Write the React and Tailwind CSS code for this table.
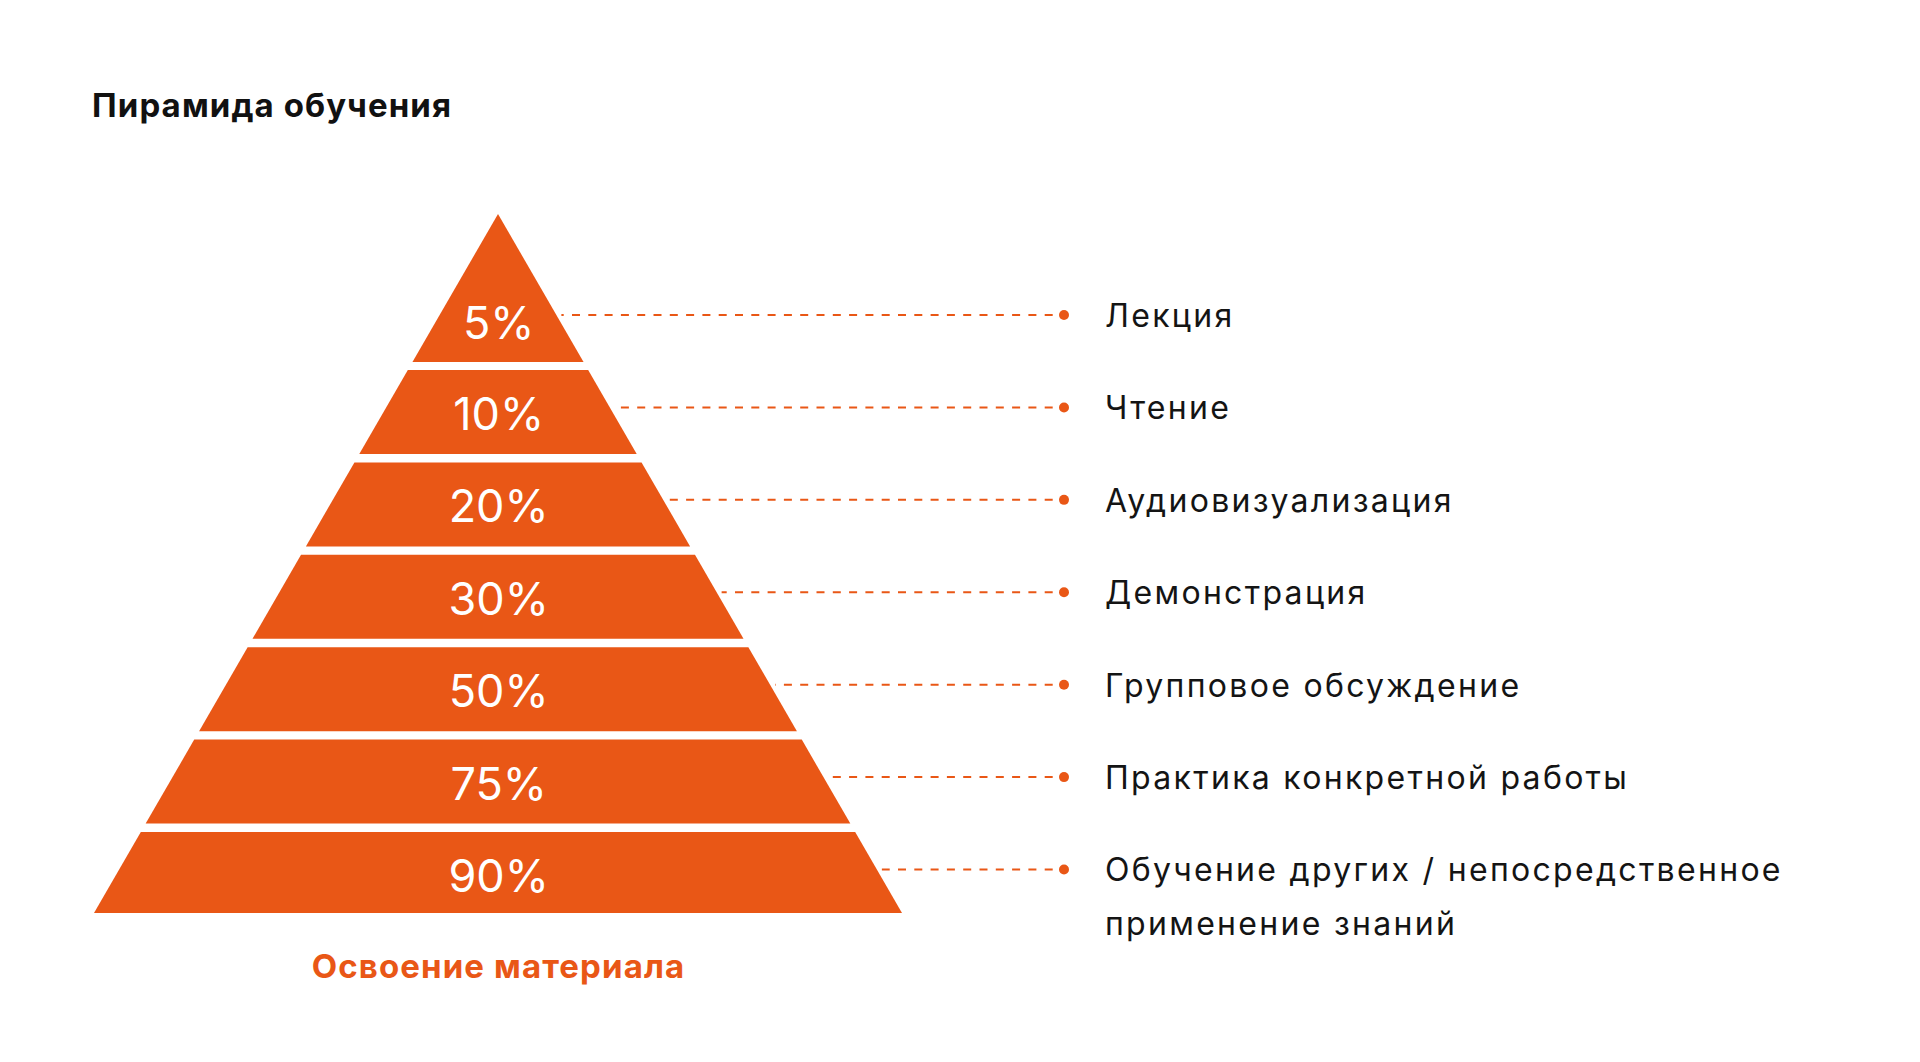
import React from "react";

const ORANGE = "#E95716";
const H = 699;
const HALF = 404;
const slope = HALF / H;

const bands = [
  { t: 0, b: 148, label: "5%", base: 125.3 },
  { t: 156, b: 240, label: "10%", base: 216 },
  { t: 248.4, b: 332.4, label: "20%", base: 308.4 },
  { t: 340.8, b: 424.8, label: "30%", base: 400.8 },
  { t: 433.2, b: 517.2, label: "50%", base: 493.2 },
  { t: 525.6, b: 609.6, label: "75%", base: 585.6 },
  { t: 618, b: 699, label: "90%", base: 677.5 },
];

const labels = [
  "Лекция",
  "Чтение",
  "Аудиовизуализация",
  "Демонстрация",
  "Групповое обсуждение",
  "Практика конкретной работы",
];

function hw(y) {
  return slope * y;
}

function Pyramid() {
  const lineYs = bands.map((_, i) => 101 + 92.42 * i);
  return (
    <svg width="976" height="699" viewBox="0 0 976 699" className="block overflow-visible">
      {lineYs.map((y, i) => {
        const start = HALF + hw(y) + 5;
        return (
          <g key={"l" + i}>
            <line
              x1="958.7"
              y1={y}
              x2={start}
              y2={y}
              stroke={ORANGE}
              strokeWidth="2"
              strokeDasharray="8 8.3"
            />
            <circle cx="970" cy={y} r="5" fill={ORANGE} />
          </g>
        );
      })}
      {bands.map((bd, i) => {
        const pts = [
          [HALF - hw(bd.t), bd.t],
          [HALF + hw(bd.t), bd.t],
          [HALF + hw(bd.b), bd.b],
          [HALF - hw(bd.b), bd.b],
        ]
          .map((p) => p.join(","))
          .join(" ");
        return (
          <g key={"b" + i}>
            <polygon points={pts} fill={ORANGE} />
            <text
              x={HALF + 0.7}
              y={bd.base}
              textAnchor="middle"
              fill="#ffffff"
              fontFamily="Inter, sans-serif"
              fontSize="45"
            >
              {bd.label}
            </text>
          </g>
        );
      })}
    </svg>
  );
}

export default function App() {
  return (
    <div className="w-full h-[1062px] bg-white pl-[92px] pt-[85px] font-[Inter,sans-serif] overflow-hidden">
      <div className="text-[33px] leading-[40px] font-bold tracking-[1.1px] text-[#111111]">Пирамида обучения</div>
      <div className="mt-[89px] ml-[2px] flex items-start">
        <div className="flex flex-col items-start">
          <Pyramid />
          <div className="w-[808px] mt-[33px] pl-[1px] text-center text-[33px] leading-[40px] font-bold tracking-[1.1px] text-[#E95716]">
            Освоение материала
          </div>
        </div>
        <div className="mt-[75px] ml-[35px] flex flex-col gap-[38.42px] text-[32px] leading-[54px] tracking-[2.3px] text-[#141414]">
          {labels.map((l) => (
            <div key={l}>{l}</div>
          ))}
          <div>
            Обучение других / непосредственное
            <br />
            применение знаний
          </div>
        </div>
      </div>
    </div>
  );
}
